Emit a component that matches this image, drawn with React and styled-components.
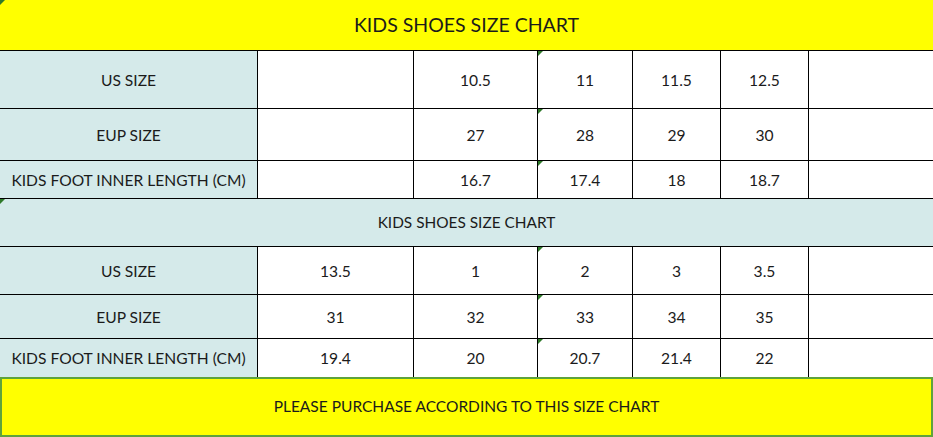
import styled, { createGlobalStyle, css } from "styled-components";

const GlobalStyle = createGlobalStyle`
  * {
    box-sizing: border-box;
  }
  body {
    margin: 0;
    background: #ffffff;
    font-family: Lato, "Open Sans", sans-serif;
    color: #1b1b1b;
  }
`;

const Sheet = styled.div`
  width: 933px;
  height: 437px;
  display: flex;
  flex-direction: column;
  background: #ffffff;
`;

const flag = css`
  &::before {
    content: "";
    position: absolute;
    left: 0;
    top: 0;
    border-top: 5px solid #2f7a2a;
    border-right: 5px solid transparent;
  }
`;

const TitleBar = styled.div`
  position: relative;
  height: 51px;
  border-bottom: 1px solid #000;
  background: #ffff00;
  display: flex;
  align-items: center;
  justify-content: center;
  font-size: 19.5px;
  padding-bottom: 2px;
  ${flag}
`;

const Grid = styled.div`
  display: grid;
  grid-template-columns: 258px 156px 124px 95px 88px 88px 1fr;
  grid-template-rows: ${(p) => p.$rows};
`;

const Cell = styled.div`
  position: relative;
  display: flex;
  align-items: center;
  justify-content: center;
  font-size: 15.6px;
  background: ${(p) => (p.$label ? "#d5eaea" : "#ffffff")};
  border-right: ${(p) => (p.$last ? "none" : "1px solid #000")};
  border-bottom: ${(p) => (p.$noBottom ? "none" : "1px solid #000")};
  ${(p) => p.$flag && flag}
`;

const Band = styled.div`
  position: relative;
  height: 48px;
  background: #d5eaea;
  border-bottom: 1px solid #000;
  display: flex;
  align-items: center;
  justify-content: center;
  font-size: 15.4px;
  padding-bottom: 2px;
  ${flag}
`;

const Footer = styled.div`
  flex: 1;
  background: #ffff00;
  border: 2px solid #5ea33c;
  display: flex;
  align-items: center;
  justify-content: center;
  font-size: 15.5px;
  padding-bottom: 2px;
`;

const firstTable = [
  ["US SIZE", "", "10.5", "11", "11.5", "12.5", ""],
  ["EUP SIZE", "", "27", "28", "29", "30", ""],
  ["KIDS FOOT INNER LENGTH (CM)", "", "16.7", "17.4", "18", "18.7", ""],
];

const secondTable = [
  ["US SIZE", "13.5", "1", "2", "3", "3.5", ""],
  ["EUP SIZE", "31", "32", "33", "34", "35", ""],
  ["KIDS FOOT INNER LENGTH (CM)", "19.4", "20", "20.7", "21.4", "22", ""],
];

const SizeTable = ({ rows, heights, lastOpen }) => (
  <Grid $rows={heights}>
    {rows.map((row, r) =>
      row.map((value, c) => (
        <Cell
          key={`${r}-${c}`}
          $label={c === 0}
          $last={c === row.length - 1}
          $flag={c === 3}
          $noBottom={lastOpen && r === rows.length - 1}
        >
          {value}
        </Cell>
      ))
    )}
  </Grid>
);

const App = () => {
  return (
    <>
      <GlobalStyle />
      <Sheet>
        <TitleBar>KIDS SHOES SIZE CHART</TitleBar>
        <SizeTable rows={firstTable} heights="58px 52px 38px" />
        <Band>KIDS SHOES SIZE CHART</Band>
        <SizeTable rows={secondTable} heights="48px 44px 38px" lastOpen />
        <Footer>PLEASE PURCHASE ACCORDING TO THIS SIZE CHART</Footer>
      </Sheet>
    </>
  );
};

export default App;
